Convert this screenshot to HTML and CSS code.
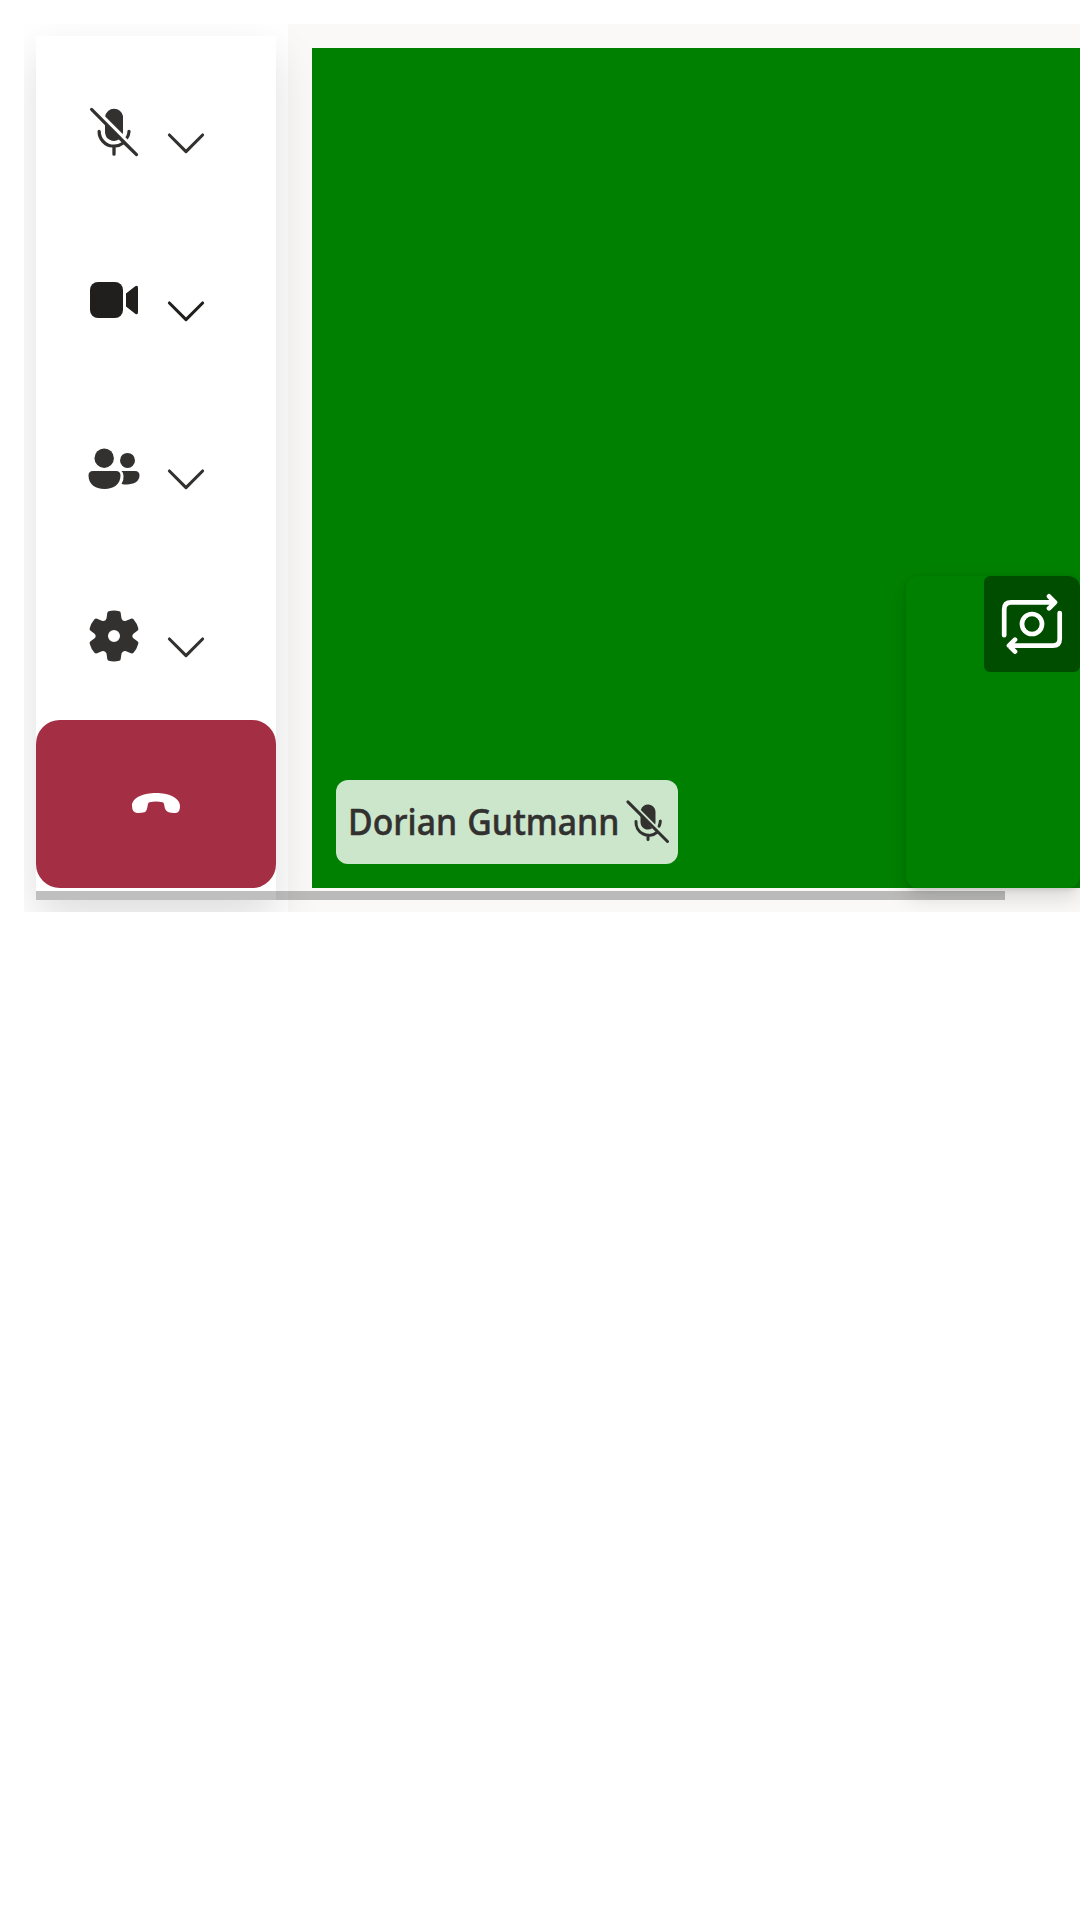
FILE: index.html
```html
<!DOCTYPE html>
<html lang="en">
<head>
<meta charset="utf-8">
<title>Call</title>
<link rel="stylesheet" href="styles.css">
</head>
<body>
<svg class="defs" aria-hidden="true">
<symbol id="chevron" viewBox="0 0 48 48"><path d="M7.4 16 24 32.600 40.600 16" fill="none" stroke="currentColor" stroke-width="3.100" stroke-linecap="round" stroke-linejoin="round"/></symbol>
</svg>
<main class="call">
  <nav class="controls">
    <button class="control"><svg class="icon" viewBox="0 0 20 20"><path d="M2.900 2.100a.52.52 0 1 0-.75.75L7 7.710V10a3 3 0 0 0 4.600 2.520l.920.920A4.270 4.270 0 0 1 10 14.200 4.500 4.500 0 0 1 5.600 9.800a.55.55 0 0 0-1.100 0 5.400 5.400 0 0 0 4.950 5.400V17.400a.52.52 0 0 0 1.100 0v-2.200a5.400 5.400 0 0 0 2.680-1.050l3.900 3.750a.52.52 0 0 0 .75-.75ZM13.800 11.730l.78.780A5.400 5.400 0 0 0 15.550 9.800a.55.55 0 0 0-1.100 0c0 .730-.240 1.330-.650 1.930ZM7.070 4.850l5.830 5.830c.07-.25.1-.51.1-.78V4.700a3 3 0 0 0-5.930.15Z"/></svg><svg class="chevron"><use href="#chevron"/></svg></button>
    <button class="control control-active"><svg class="icon" viewBox="0 0 60 60"><rect x="6" y="12" width="33" height="36" rx="8"/><path d="M42 23.500 51.200 16.300Q54 14.700 54 18v24Q54 45.300 51.200 43.700L42 36.500Z"/></svg><svg class="chevron"><use href="#chevron"/></svg></button>
    <button class="control"><svg class="icon" viewBox="0 0 60 60"><g transform="translate(0 1.700)"><circle cx="20.200" cy="18.500" r="9.700"/><circle cx="43.500" cy="20.700" r="7.500"/><path d="M9 31.300h23q4.500 0 4.500 4.500C36.500 44.300 30 49.300 20.500 49.300S4.500 44.300 4.500 35.800Q4.500 31.300 9 31.300ZM37.500 31.300H51q4.500 0 4.500 4.500C55.500 43 47 46 37.500 44.200Q40 40 39.500 36 39.500 33 37.500 31.300Z"/></g></svg><svg class="chevron"><use href="#chevron"/></svg></button>
    <button class="control"><svg class="icon" viewBox="0 0 60 60"><path fill-rule="evenodd" d="M24.800 5.200Q30 4 35.200 5.200 36.500 5.500 36.700 7L37.500 12.500Q38.500 15.500 41.500 15L47 12.700Q48.500 12.200 49.500 13.300 53 17.300 54.300 22.300 54.700 23.500 53.700 24.500L49.400 27.700Q47.200 30 49.400 32.300L53.700 35.500Q54.700 36.500 54.300 37.700 53 42.700 49.500 46.700 48.500 47.800 47 47.300L41.500 45Q38.500 44.500 37.500 47.500L36.700 53Q36.500 54.500 35.200 54.800 30 56 24.800 54.800 23.500 54.500 23.300 53L22.500 47.500Q21.500 44.500 18.500 45L13 47.300Q11.500 47.800 10.500 46.700 7 42.700 5.700 37.700 5.300 36.500 6.300 35.500L10.600 32.300Q12.800 30 10.600 27.700L6.300 24.500Q5.300 23.500 5.700 22.300 7 17.300 10.500 13.300 11.500 12.200 13 12.700L18.500 15Q21.500 15.500 22.500 12.500L23.300 7Q23.500 5.500 24.800 5.200ZM30 24a6 6 0 1 0 0 12 6 6 0 0 0 0-12Z"/></svg><svg class="chevron"><use href="#chevron"/></svg></button>
    <button class="hangup"><svg class="icon" viewBox="0 0 60 60"><path d="M30 19C42 19 54 23.500 54 32Q54 37 51.500 38.500 48 39.500 43.500 38.600 39.500 37.500 38.700 33.500L37.900 29.600Q37.500 28.700 36.500 28.300 30 26.500 23.500 28.300 22.500 28.700 22.100 29.600L21.300 33.500Q20.500 37.500 18.500 38.300 15 39 11 38.900 6 38.500 6 31.500C6 23.500 18 19 30 19Z"/></svg></button>
  </nav>
  <section class="gallery">
    <div class="video">
      <div class="name"><span class="name-text"><span>Dorian Gutmann</span></span><svg class="name-mic" viewBox="0 0 16 16"><path d="M5.600 4 10.400 8.800Q10.500 8.400 10.500 8V4.500A2.500 2.500 0 0 0 5.600 4ZM5.500 5.500V8a2.500 2.500 0 0 0 3.900 2.080Z" fill="currentColor"/><path d="m1.300 1.300 13.200 13.200M4 7.800a4.300 4.300 0 0 0 7.100 3.600M12.100 7.700q0 .9-.4 1.700M8 12.300V13.800" fill="none" stroke="currentColor" stroke-linecap="round"/></svg></div>
    </div>
    <div class="local">
      <button class="switch"><svg width="72" height="72" viewBox="0 0 72 72" fill="none" stroke="#fff" stroke-width="4.700" stroke-linecap="round" stroke-linejoin="round"><path d="M8.200 47.200V21.300q0-7 7-7H58.700M53 8.300l6 6L53 20.300M63.700 25V50.700q0 7-7 7H13.300M19 51.700l-6 6L19 63.700"/><circle cx="36" cy="36" r="10"/></svg></button>
    </div>
  </section>
  <div class="scrollbar"></div>
</main>
</body>
</html>
```
FILE: styles.css
```css
* { box-sizing: border-box; }
body { margin: 0; padding: 24px 0 0 24px; background: #fff; overflow: hidden; }
button { border: 0; padding: 0; background: none; font: inherit; color: inherit; }
svg { display: block; flex: none; }
.defs { position: absolute; width: 0; height: 0; }
.call { position: relative; display: flex; height: 888px; gap: 12px; padding-left: 12px; overflow: hidden; color: #323130; }
.controls { display: flex; flex-direction: column; width: 240px; height: 864px; margin-top: 12px; flex: none; position: relative; z-index: 1; background: #fff; box-shadow: 0 19.200px 43.200px rgba(0,0,0,.132); }
.control { display: flex; align-items: center; gap: 18px; width: 240px; height: 168px; padding: 24px 0 0 48px; }
.control-active { color: #201f1e; }
.icon { width: 60px; height: 60px; fill: currentColor; }
.chevron { width: 48px; height: 48px; margin-top: 22px; }
.hangup { display: flex; align-items: center; justify-content: center; width: 240px; height: 168px; margin-top: 12px; border-radius: 24px; background: #a42e43; color: #fff; }
.gallery { position: relative; width: 792px; height: 888px; padding: 24px 0 24px 24px; flex: none; background: #faf9f8; }
.video { display: flex; align-items: flex-end; height: 840px; padding: 24px; background: #008000; position: relative; z-index: 2; }
.name { display: flex; align-items: center; width: 342px; height: 84px; padding-left: 12px; border-radius: 12px; background: rgba(255,255,255,.8); }
.name-text { width: 276px; white-space: nowrap; font: 500 36px/48px "Noto Sans", "Open Sans", sans-serif; word-spacing: 1.5px; -webkit-text-stroke: .5px currentColor; }
.name-text span { display: inline-block; transform: scaleX(.937); transform-origin: 0 50%; }
.name-mic { width: 48px; height: 48px; }
.local { position: absolute; z-index: 3; left: 618px; top: 552px; width: 174px; height: 312px; display: flex; justify-content: flex-end; align-items: flex-start; border-radius: 12px; background: #008000; box-shadow: 0 9.600px 21.600px rgba(0,0,0,.132), 0 1.800px 5.400px rgba(0,0,0,.108); }
.switch { width: 96px; height: 96px; display: grid; place-items: center; border-radius: 6px 12px 6px 6px; background: rgba(0,0,0,.4); }
.scrollbar { position: absolute; z-index: 4; left: 12px; top: 867px; width: 969px; height: 9px; background: rgba(0,0,0,.25); }
```
